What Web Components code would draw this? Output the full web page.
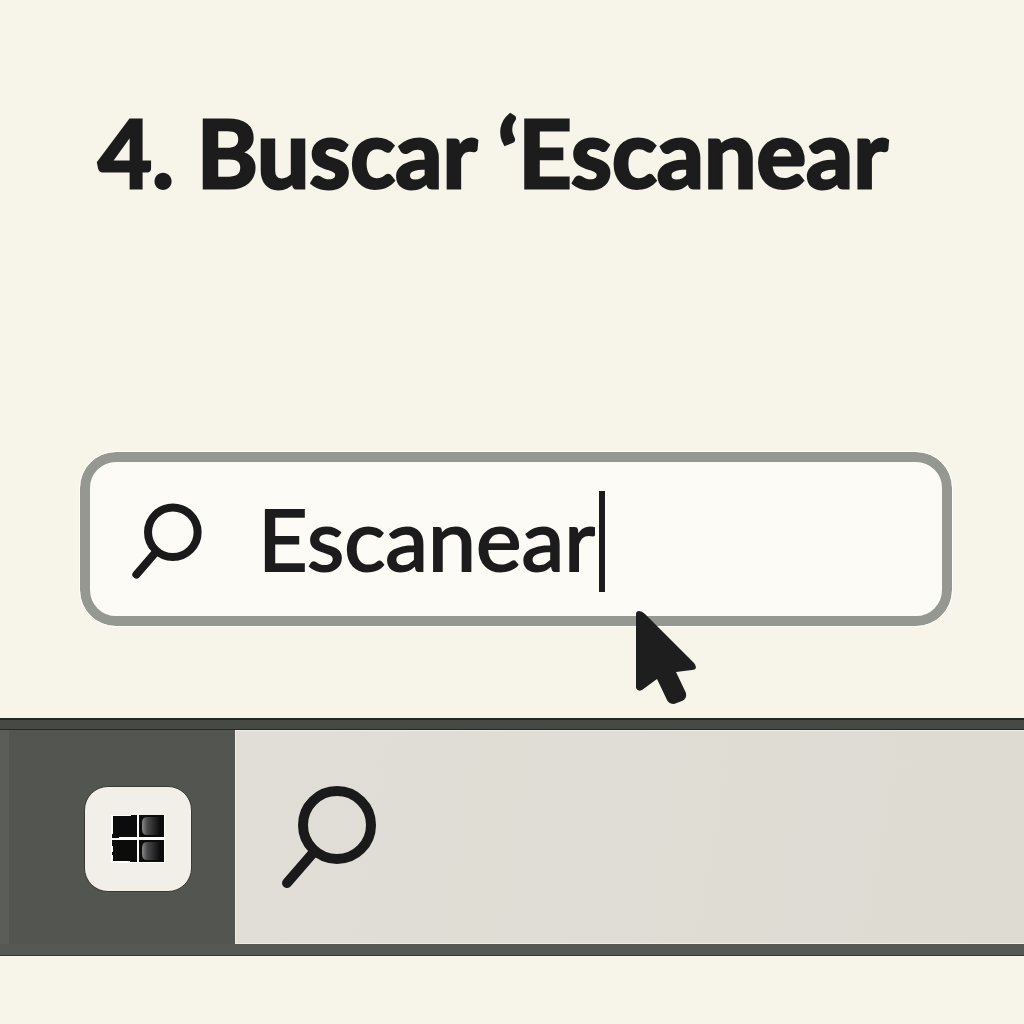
<!DOCTYPE html>
<html lang="es">
<head>
<meta charset="utf-8">
<meta name="viewport" content="width=device-width, initial-scale=1">
<title>Buscar Escanear</title>
<style>
  html { background: #f7f4e9; }
  body { margin: 0; min-height: 100vh; background: #f7f4e9; color: #1c1c1c; font-family: Lato, "Open Sans", sans-serif; }
</style>
</head>
<body>
<guide-step>
  <step-title slot="title">4. Buscar ‘Escanear</step-title>
  <search-box slot="search" label="Buscar" value="Escanear"></search-box>
  <task-bar slot="bar"></task-bar>
</guide-step>
<script>
  class ShadowElement extends HTMLElement {
    connectedCallback() {
      if (!this.shadowRoot) this.attachShadow({ mode: "open" }).innerHTML = this.render();
    }
  }

  customElements.define("search-icon", class extends ShadowElement {
    render() {
      const stroke = this.getAttribute("stroke") || "10";
      return `<style>
        :host { display: block; flex: none; width: 70px; height: 76px; }
        svg { display: block; width: 100%; height: 100%; overflow: visible; }
      </style>
      <svg viewBox="0 0 96 104" fill="none" stroke="#1a1a1a" stroke-width="${stroke}" aria-hidden="true">
        <circle cx="56" cy="40" r="34"/>
        <path d="M32 68 6 98" stroke-linecap="round"/>
      </svg>`;
    }
  });

  customElements.define("mouse-pointer", class extends ShadowElement {
    render() {
      return `<style>
        :host { display: block; width: 60px; height: 93px; }
        svg { display: block; width: 100%; height: 100%; }
      </style>
      <svg viewBox="0 0 60 93" aria-hidden="true">
        <path fill="#1e1e1e" d="M0 3Q0 0 3 0Q6 0 9 3L58 52Q60 54 60 57Q59 59 56 59L40 61L50 82Q51 88 46 90L38 93Q33 93 31 89L21 68L6 79Q2 81 0 77Z"/>
      </svg>`;
    }
  });

  customElements.define("step-title", class extends ShadowElement {
    render() {
      return `<style>
        :host { display: block; }
        h1 { margin: 0; font: 700 93px/120px Lato, "Open Sans", sans-serif; white-space: nowrap;
          -webkit-text-stroke: 3px; }
      </style>
      <h1><slot></slot></h1>`;
    }
  });

  customElements.define("search-box", class extends ShadowElement {
    render() {
      return `<style>
        :host { display: block; position: relative; }
        label { display: flex; align-items: center; box-sizing: border-box; padding: 24px 42px 20px;
          border: 10px solid #959891; border-radius: 36px; background: #fdfbf6; outline: 1px solid #fffefa; }
        input { field-sizing: content; min-width: 0; margin: 0 0 6px 56px; padding: 0; border: 0; outline: 0; background: none;
          color: #1c1c1c; font: 400 86px/104px Lato, "Open Sans", sans-serif; height: 104px; -webkit-text-stroke: 2px; }
        .caret { flex: none; width: 6px; height: 101px; margin-left: 4px; background: #1c1c1c; }
        mouse-pointer { position: absolute; left: 556px; top: 159px; }
      </style>
      <label>
        <search-icon stroke="11"></search-icon>
        <input type="text" aria-label="${this.getAttribute("label")}" value="${this.getAttribute("value")}">
        <span class="caret"></span>
      </label>
      <mouse-pointer></mouse-pointer>`;
    }
  });

  customElements.define("start-button", class extends ShadowElement {
    render() {
      return `<style>
        :host { display: block; }
        button { display: grid; place-items: center; width: 108px; height: 106px; padding: 0; border: 1px solid #373a35;
          border-radius: 24px; background: #f2efe8; }
        svg { display: block; width: 54px; height: 50px; }
      </style>
      <button type="button" aria-label="Inicio">
        <svg viewBox="0 0 54 50" aria-hidden="true">
          <defs><linearGradient id="shine">
            <stop offset="0" stop-color="#888"/><stop offset=".3" stop-color="#484848"/><stop offset="1" stop-color="#0c0c0c"/>
          </linearGradient></defs>
          <path fill="#fffefa" d="M0 1H54V49H0Z"/>
          <path fill="#0c0c0c" d="M2 2H20V1H26V23H8V24H1V20H2Z M28 1H53V23H28Z M1 26H26V48H19V47H2V41H1V38H2V32H1Z M28 26H53V48H28Z"/>
          <path fill="url(#shine)" d="M36 3H49V21H36Q31 21 31 15V9Q31 3 36 3Z"/>
          <path fill="url(#shine)" d="M36 28H49V46H36Q31 46 31 40V34Q31 28 36 28Z"/>
        </svg>
      </button>`;
    }
  });

  customElements.define("task-bar", class extends ShadowElement {
    render() {
      return `<style>
        :host { display: block; border-top: 2px solid #252823; border-bottom: 1px solid #343731; background: #555852; }
        .top { height: 9px; background: #474a44; border-bottom: 1px solid #252823; }
        .row { display: flex; height: 214px; }
        .start { box-sizing: border-box; width: 235px; padding: 4px 0 0 75px; border-left: 9px solid #5b5e58;
          display: flex; align-items: center; background: #525550; }
        .field { box-sizing: border-box; flex: 1; display: flex; align-items: center; padding-left: 45px;
          border: 1px solid #efede5; border-right: 0; background: linear-gradient(100deg, #e1ded7, #dedbd3); }
        search-icon { width: 96px; height: 104px; }
        .bottom { height: 11px; background: #565953; }
      </style>
      <div class="top"></div>
      <div class="row">
        <div class="start"><start-button></start-button></div>
        <div class="field"><search-icon></search-icon></div>
      </div>
      <div class="bottom"></div>`;
    }
  });

  customElements.define("guide-step", class extends ShadowElement {
    render() {
      return `<style>
        :host { display: block; }
        header { padding: 92px 72px 0 98px; }
        .search { padding: 240px 72px 92px 80px; }
      </style>
      <header><slot name="title"></slot></header>
      <div class="search"><slot name="search"></slot></div>
      <slot name="bar"></slot>`;
    }
  });
</script>
</body>
</html>
